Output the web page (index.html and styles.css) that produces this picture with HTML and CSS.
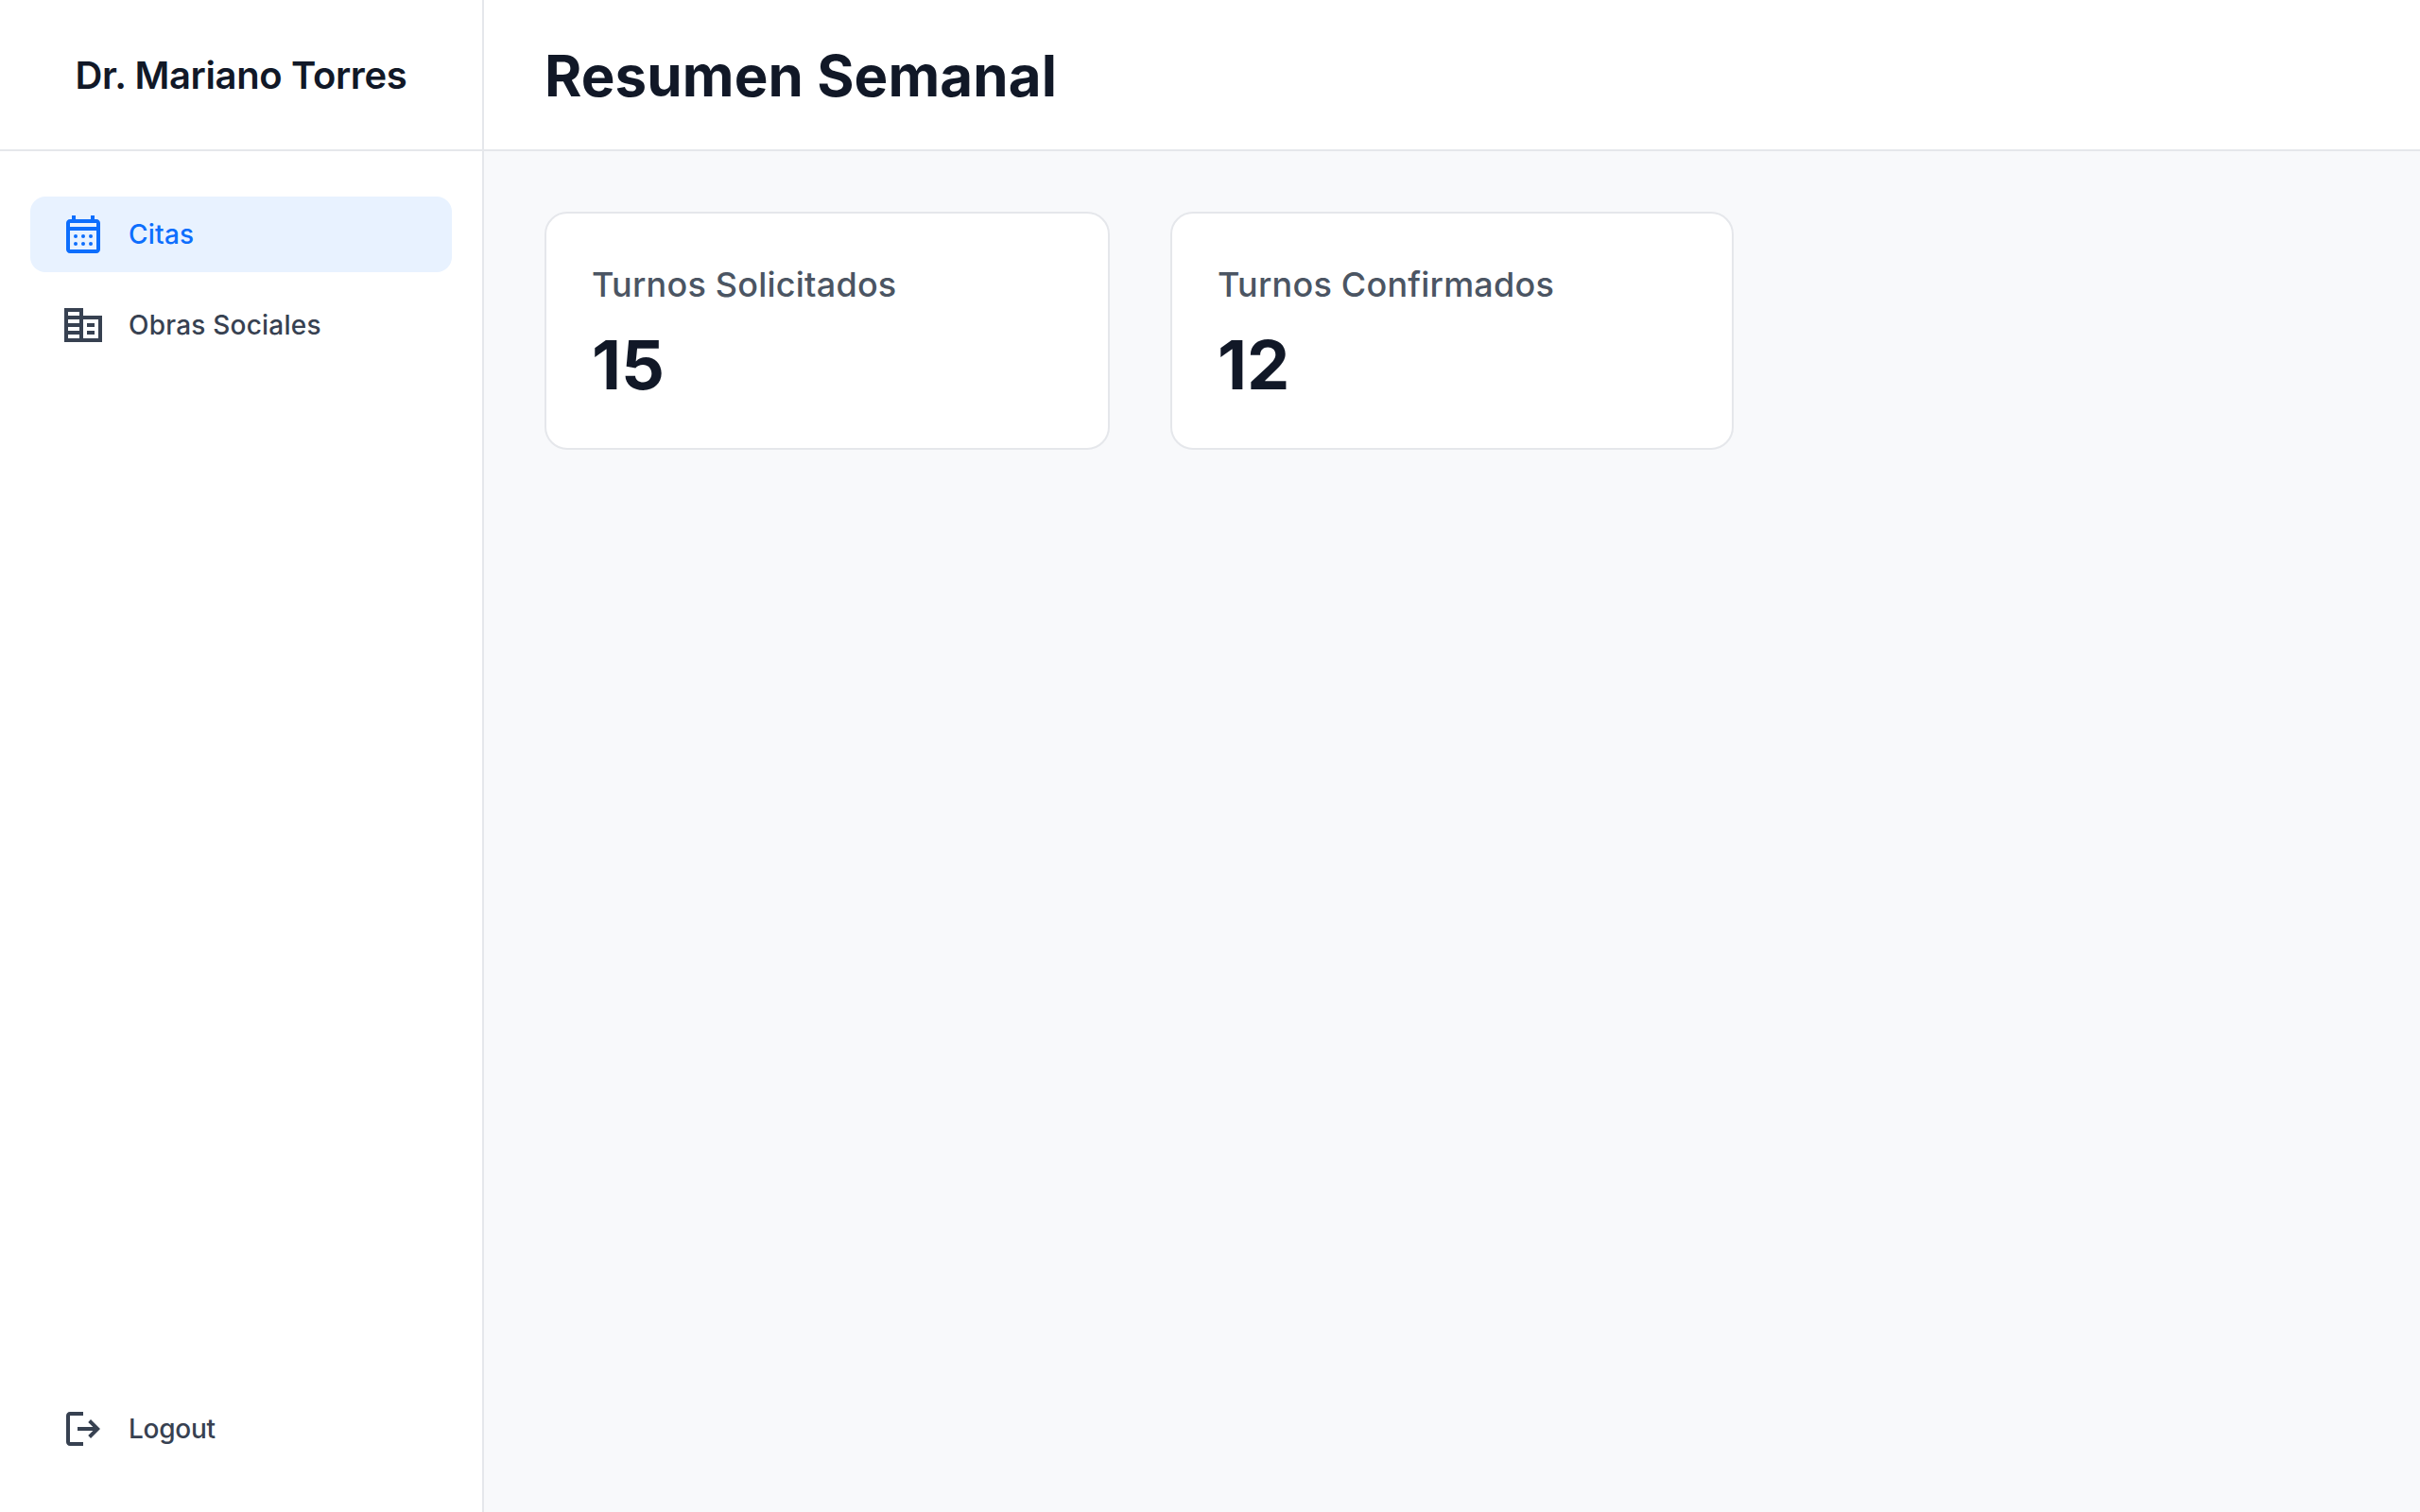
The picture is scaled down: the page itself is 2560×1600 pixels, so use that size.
FILE: index.html
```html
<!DOCTYPE html>
<html lang="es">
<head>
<meta charset="utf-8">
<title>Resumen Semanal</title>
<link rel="stylesheet" href="styles.css">
</head>
<body>
<div class="app">
  <aside class="sidebar">
    <div class="brand">Dr. Mariano Torres</div>
    <nav class="menu">
      <a class="item active"><svg class="icon" viewBox="0 0 24 24"><path d="M5 22c-1.1 0-2-.9-2-2V6c0-1.1.9-2 2-2h1V2h2v2h8V2h2v2h1c1.1 0 2 .9 2 2v14c0 1.1-.9 2-2 2zm0-2h14V10H5zM5 8h14V6H5z"/><circle cx="8" cy="13" r="1"/><circle cx="12" cy="13" r="1"/><circle cx="16" cy="13" r="1"/><circle cx="8" cy="17" r="1"/><circle cx="12" cy="17" r="1"/><circle cx="16" cy="17" r="1"/></svg><span>Citas</span></a>
      <a class="item"><svg class="icon" viewBox="0 0 24 24"><path d="M12 7V3H2v18h20V7H12zm-2 12H4v-2h6v2zm0-4H4v-2h6v2zm0-4H4V9h6v2zm0-4H4V5h6v2zm10 12h-8V9h8v10zm-2-8h-4v2h4v-2zm0 4h-4v2h4v-2z"/></svg><span>Obras Sociales</span></a>
    </nav>
    <div class="bottom">
      <a class="item logout"><svg class="icon" viewBox="0 0 24 24"><path d="M5 21c-1.1 0-2-.9-2-2V5c0-1.1.9-2 2-2h7v2H5v14h7v2zm11-4-1.375-1.45L17.175 13H9v-2h8.175l-2.55-2.55L16 7l5 5z"/></svg><span>Logout</span></a>
    </div>
  </aside>
  <main class="main">
    <header class="header"><h1>Resumen Semanal</h1></header>
    <section class="cards">
      <article class="card"><p class="label">Turnos Solicitados</p><p class="value">15</p></article>
      <article class="card"><p class="label">Turnos Confirmados</p><p class="value">12</p></article>
    </section>
  </main>
</div>
</body>
</html>
```
FILE: styles.css
```css
* { box-sizing: border-box; margin: 0; }
body { font-family: Inter, sans-serif; color: #111827; background: #f8f9fb; }
.app { display: flex; height: 100vh; }
.sidebar { width: 512px; flex: none; display: flex; flex-direction: column; background: #fff; border-right: 2px solid #e5e7eb; }
.brand { height: 160px; display: flex; align-items: center; justify-content: center; border-bottom: 2px solid #e5e7eb; font-size: 40px; font-weight: 600; letter-spacing: -0.36px; }
.menu { flex: 1; padding: 48px 32px; display: flex; flex-direction: column; gap: 16px; }
.item { height: 80px; padding: 0 32px; display: flex; align-items: center; gap: 24px; border-radius: 16px; font-size: 28px; font-weight: 500; letter-spacing: 0.22px; color: #374151; }
.active { background: #e8f2ff; color: #0d6efd; }
.logout { letter-spacing: -0.25px; }
.icon { width: 48px; height: 48px; fill: currentColor; }
.bottom { padding: 48px 32px; }
.main { flex: 1; }
.header { height: 160px; display: flex; align-items: center; padding: 2px 64px 0; background: #fff; border-bottom: 2px solid #e5e7eb; }
h1 { font-size: 60px; font-weight: 700; letter-spacing: 0.1px; }
.cards { display: grid; grid-template-columns: 598px 596px 1fr; gap: 64px; padding: 64px; }
.card { padding: 48px; background: #fff; border: 2px solid #e5e7eb; border-radius: 24px; }
.label { font-size: 36px; line-height: 54px; font-weight: 500; letter-spacing: 0.22px; color: #4b5563; }
.value { font-size: 72px; line-height: 80px; font-weight: 700; margin-top: 18px; }
```
